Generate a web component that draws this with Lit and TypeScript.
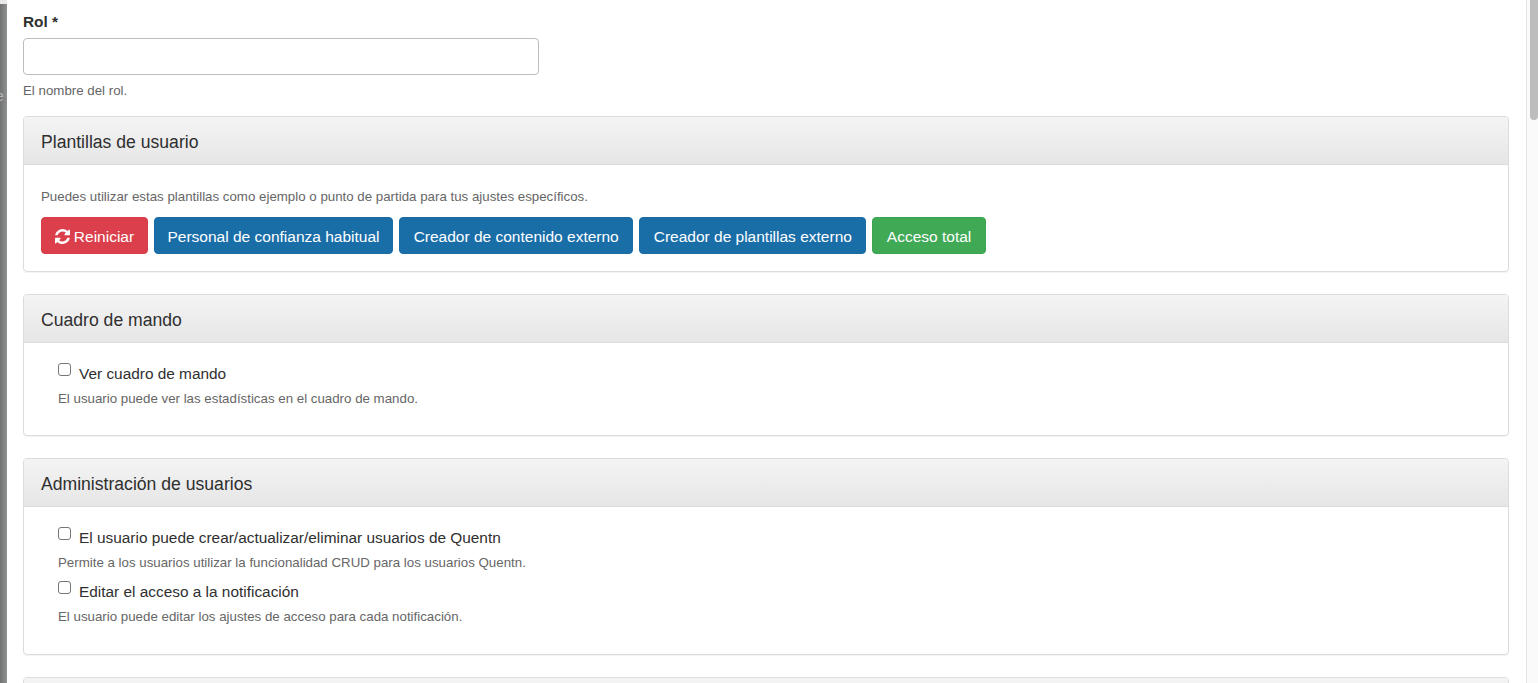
import { LitElement, html, css } from "lit";
import { customElement } from "lit/decorators.js";

const syncIcon = html`<svg class="ico" viewBox="0 0 1536 1536" aria-hidden="true"><path fill="currentColor" d="M1511 928q0 5-1 7-64 268-268 434.500t-478 166.500q-146 0-282.500-55t-243.500-157l-129 129q-19 19-45 19t-45-19-19-45v-448q0-26 19-45t45-19h448q26 0 45 19t19 45-19 45l-137 137q71 66 161 102t187 36q134 0 250-65t186-179q11-17 53-117 8-23 30-23h192q13 0 22.500 9.500t9.500 22.500zM1536 128v448q0 26-19 45t-45 19h-448q-26 0-45-19t-19-45 19-45l138-138q-148-137-349-137-134 0-250 65t-186 179q-11 17-53 117-8 23-30 23h-199q-13 0-22.500-9.500t-9.500-22.500v-7q65-268 270-434.500t480-166.500q146 0 284 55.500t245 156.500l130-129q19-19 45-19t45 19 19 45z"/></svg>`;

const BUTTONS: { label: string; kind: string; width: number; icon?: boolean }[] = [
  { label: "Reiniciar", kind: "danger", width: 107, icon: true },
  { label: "Personal de confianza habitual", kind: "primary", width: 239 },
  { label: "Creador de contenido externo", kind: "primary", width: 234.4 },
  { label: "Creador de plantillas externo", kind: "primary", width: 226.8 },
  { label: "Acceso total", kind: "success", width: 113.8 },
];

@customElement("app-root")
export class AppRoot extends LitElement {
  static styles = css`
    :host { display: flex; height: 683px; overflow: hidden; background: #fff; color: #2f2f2f; font-family: "Liberation Sans", Arial, sans-serif; font-size: 15.4px; line-height: 1.5; }
    .backdrop { width: 7px; flex: none; overflow: hidden; background: linear-gradient(90deg, #6f7271, #8f9291); color: #b9bbba; font-size: 14px; display: flex; flex-direction: column; }
    .backdrop .cap { height: 4px; background: #e9e9e9; flex: none; }
    .backdrop .e { margin-top: 82px; margin-left: -4px; line-height: 20px; }
    .main { flex: 1; min-width: 0; padding: 12px 17px 0 16px; }
    .label { display: block; font-weight: 700; line-height: 20px; margin-bottom: 6px; font-size: 15.4px; }
    .input { display: block; box-sizing: border-box; width: 516px; height: 37px; border: 1px solid #bdbdbd; border-radius: 4px; background: #fff; padding: 0 12px; margin: 0; }
    .help { font-size: 13.3px; line-height: 20px; color: #666; }
    .role-help { margin-top: 6px; margin-bottom: 15px; }
    .card { border: 1px solid #dcdcdc; border-radius: 4px; margin-bottom: 22px; box-shadow: 0 1px 1px rgba(0,0,0,.05); }
    .head { height: 48px; box-sizing: border-box; border-bottom: 1px solid #dcdcdc; background: linear-gradient(#f4f4f4, #e6e6e6); padding: 0 17px; font-size: 17.6px; line-height: 51px; color: #2f2f2f; border-radius: 3px 3px 0 0; }
    .tmpl { padding: 22px 17px 17px; }
    .tmpl .help { margin-bottom: 11px; line-height: 19px; }
    .btns { display: flex; gap: 6px; }
    .btn { box-sizing: border-box; height: 37px; padding-top: 1px; border: 1px solid; border-radius: 4px; color: #fff; font: 15.5px/35px "Liberation Sans", Arial, sans-serif; display: flex; align-items: center; justify-content: center; gap: 4px; white-space: nowrap; flex: none; }
    .danger { background: #dc3f4c; border-color: #d83a47; }
    .primary { background: #1a6ea8; border-color: #1a6ca3; }
    .success { background: #3fa956; border-color: #3aa551; }
    .ico { width: 15px; height: 15px; }
    .checks { padding: 21px 17px 26px 34px; }
    .row { display: flex; height: 20px; align-items: flex-start; }
    .row-label { margin-top: -2px; }
    .box { box-sizing: border-box; width: 13px; height: 13px; margin: -1px 8px 0 0; border: 1px solid #767676; border-radius: 3px; background: #fff; flex: none; }
    .item .help { margin-top: 5px; margin-bottom: 9px; }
    .item:last-child .help { margin-bottom: 0; }
    .item + .item { margin-bottom: 1px; }
    .partial { margin-bottom: 0; height: 40px; }
    .scroll { width: 12px; flex: none; box-sizing: border-box; border-left: 1px solid #e6e6e6; background: #fafafa; padding-left: 3px; }
    .thumb { width: 8px; height: 120px; background: #bdbdbd; border-radius: 0 0 4px 4px; }
  `;

  private card(title: string, items: [string, string][]) {
    return html`<section class="card">
      <div class="head">${title}</div>
      <div class="checks">
        ${items.map(([l, h]) => html`<div class="item">
          <div class="row"><span class="box"></span><span class="row-label">${l}</span></div>
          <div class="help">${h}</div>
        </div>`)}
      </div>
    </section>`;
  }

  render() {
    return html`
      <div class="backdrop"><div class="cap"></div><div class="e">e</div></div>
      <main class="main">
        <label class="label">Rol *</label>
        <div class="input"></div>
        <div class="help role-help">El nombre del rol.</div>
        <section class="card">
          <div class="head">Plantillas de usuario</div>
          <div class="tmpl">
            <div class="help">Puedes utilizar estas plantillas como ejemplo o punto de partida para tus ajustes específicos.</div>
            <div class="btns">
              ${BUTTONS.map((b) => html`<div class="btn ${b.kind}" style="width:${b.width}px">${b.icon ? syncIcon : ""}${b.label}</div>`)}
            </div>
          </div>
        </section>
        ${this.card("Cuadro de mando", [["Ver cuadro de mando", "El usuario puede ver las estadísticas en el cuadro de mando."]])}
        ${this.card("Administración de usuarios", [
          ["El usuario puede crear/actualizar/eliminar usuarios de Quentn", "Permite a los usuarios utilizar la funcionalidad CRUD para los usuarios Quentn."],
          ["Editar el acceso a la notificación", "El usuario puede editar los ajustes de acceso para cada notificación."],
        ])}
        <section class="card partial"><div class="head"></div></section>
      </main>
      <div class="scroll"><div class="thumb"></div></div>
    `;
  }
}
